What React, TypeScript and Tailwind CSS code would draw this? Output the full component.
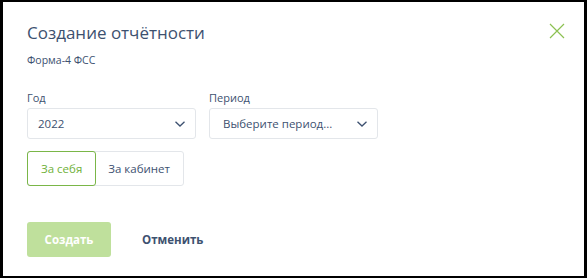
import React from "react";

const Chevron = () => (
  <svg width="12" height="8" viewBox="0 0 12 8" fill="none">
    <path d="M1.5 1.8 L6 6 L10.5 1.8" stroke="#3d5170" strokeWidth="1.3" />
  </svg>
);

export default function App() {
  return (
    <div
      className="w-[587px] h-[278px] bg-black pl-[3px] pt-[2px] pr-[3px] pb-[2px]"
      style={{ fontFamily: '"Open Sans", sans-serif' }}
    >
      <div className="relative h-full bg-white pl-[24px] pt-[19px]">
        <button className="absolute right-[19px] top-[21px]">
          <svg width="16" height="16" viewBox="0 0 16 16" fill="none">
            <path d="M1 1 L15 15 M15 1 L1 15" stroke="#8cc152" strokeWidth="1.2" />
          </svg>
        </button>
        <h1 className="text-[17px] leading-[24px] text-[#3d5170]">Создание отчётности</h1>
        <div className="mt-[8px] text-[10.5px] leading-[14px] text-[#3d5170]">Форма-4 ФСС</div>

        <div className="mt-[24px] flex gap-[13px]">
          <div className="flex flex-col">
            <span className="text-[11px] leading-[14px] text-[#3d5170]">Год</span>
            <div className="mt-[3px] w-[169px] h-[31px] rounded-[3px] border border-[#e3e6ea] flex items-center justify-between pl-[10px] pr-[9px] text-[11.5px] text-[#3d5170]">
              <span>2022</span>
              <Chevron />
            </div>
          </div>
          <div className="flex flex-col">
            <span className="text-[11px] leading-[14px] text-[#3d5170]">Период</span>
            <div className="mt-[3px] w-[169px] h-[31px] rounded-[3px] border border-[#e3e6ea] flex items-center justify-between pl-[13px] pr-[9px] text-[11.5px] text-[#3d5170]">
              <span>Выберите период...</span>
              <Chevron />
            </div>
          </div>
        </div>

        <div className="mt-[12px] flex w-fit h-[35px] rounded-[3px] border border-[#e3e6ea] text-[11.5px]">
          <div className="flex items-center px-[13px] rounded-[3px] border border-[#7ab648] -m-px text-[#6fb13a]">
            За себя
          </div>
          <div className="flex items-center px-[13px] text-[#3d5170]">За кабинет</div>
        </div>

        <div className="mt-[36px] flex items-center">
          <div className="w-[84px] h-[35px] rounded-[3px] bg-[#bfe09c] flex items-center justify-center text-white font-bold text-[11.5px]">
            Создать
          </div>
          <div className="ml-[31px] font-bold text-[11.5px] text-[#3d5170]">Отменить</div>
        </div>
      </div>
    </div>
  );
}
